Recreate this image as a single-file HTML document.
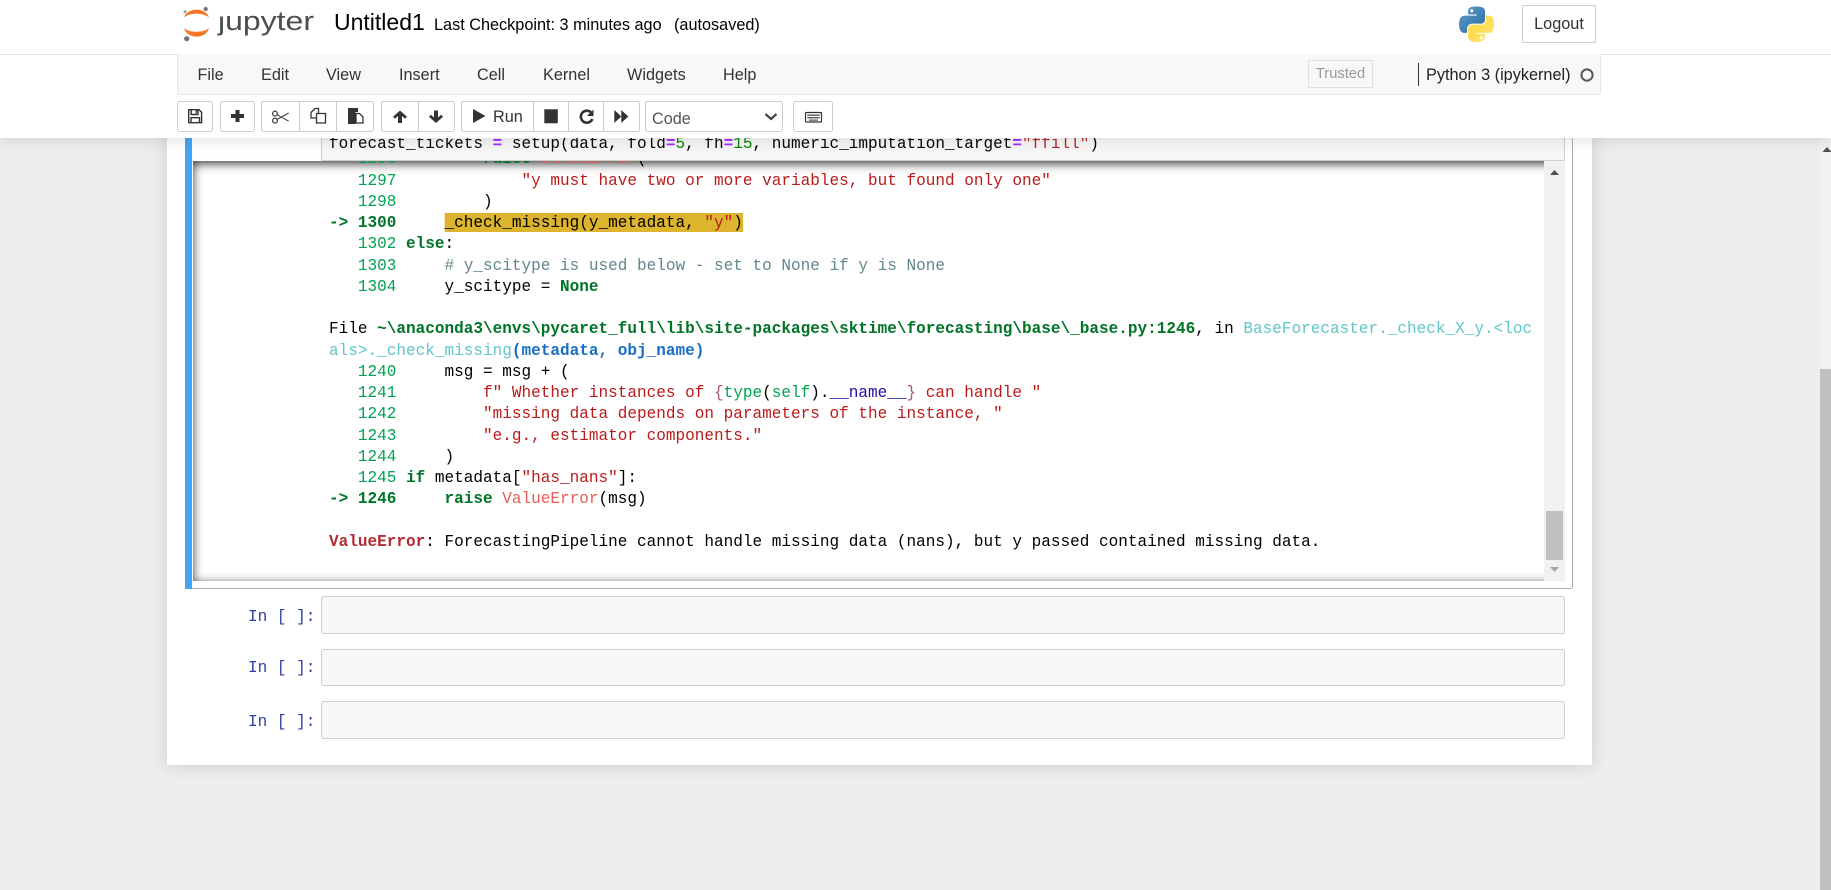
<!DOCTYPE html>
<html><head><meta charset="utf-8"><title>Untitled1 - Jupyter Notebook</title>
<style>
html,body{margin:0;padding:0;width:1831px;height:890px;overflow:hidden;background:#eee;font-family:"Liberation Sans",Arial,sans-serif;color:#000}
.a{position:absolute;box-sizing:border-box}
.t{position:absolute;white-space:pre;line-height:1}
.mono{font-family:"Liberation Mono",monospace;font-size:16.5px;line-height:21.25px;white-space:pre;margin:0;transform:scaleX(.972);transform-origin:0 0;position:absolute;color:#000}
.m{position:absolute;top:66px;font-size:16.25px;line-height:18px;color:#333}
.b{position:absolute;top:101px;height:31px;box-sizing:border-box;border:1px solid #ccc;background:#fff}
.ln{color:#00a250}.ar{color:#007427;font-weight:bold}.k{color:#007427;font-weight:bold}.s{color:#bb1a1a}.c{color:#60878e}.cy{color:#60c6c8}.bl{color:#1a6fc4;font-weight:bold}.hl{background:#ddb42d}.ve{color:#e75c58;font-weight:bold}.gn{color:#00a250}.pu{color:#a45a77}.nv{color:#1e0fa0}.ee{color:#b22b31;font-weight:bold}
.op{color:#a2f;font-weight:bold}.nm{color:#080}
.cell{position:absolute;left:321px;width:1244px;box-sizing:border-box;background:#f7f7f7;border:1px solid #cfcfcf;border-radius:2.5px}
</style></head><body>

<!-- notebook panel -->
<div class="a" style="left:167px;top:0;width:1425px;height:765px;background:#fff;box-shadow:0 0 15px 1px rgba(87,87,87,.2)"></div>

<!-- selected cell -->
<div class="a" style="left:185px;top:120px;width:388px;height:469px;border-left:7px solid #42a5f5"></div>
<div class="a" style="left:192px;top:120px;width:1381px;height:469px;border-right:1px solid #ababab;border-bottom:1px solid #ababab;border-radius:0 0 2.5px 0"></div>

<!-- input area -->
<div class="a" style="left:321px;top:120px;width:1244px;height:41px;background:#f7f7f7;border:1px solid #cfcfcf;overflow:hidden">
<pre class="mono" style="left:7px;top:11.5px">forecast_tickets <span class="op">=</span> setup(data, fold<span class="op">=</span><span class="nm">5</span>, fh<span class="op">=</span><span class="nm">15</span>, numeric_imputation_target<span class="op">=</span><span style="color:#ba2121">"ffill"</span>)</pre>
</div>

<!-- output -->
<div class="a" style="left:193px;top:161px;width:1372px;height:420px;overflow:hidden;box-shadow:inset 0 2.5px 10px rgba(0,0,0,.8)">
<pre class="mono" style="left:136.4px;top:-12.75px"><span class="ln">   1296</span>         <span class="k">raise</span> <span class="ve" style="font-weight:normal">ValueError</span>(
<span class="ln">   1297</span>             <span class="s">"y must have two or more variables, but found only one"</span>
<span class="ln">   1298</span>         )
<span class="ar">-&gt; 1300</span>     <span class="hl">_check_missing(y_metadata, <span class="s">"y"</span>)</span>
<span class="ln">   1302</span> <span class="k">else</span>:
<span class="ln">   1303</span>     <span class="c"># y_scitype is used below - set to None if y is None</span>
<span class="ln">   1304</span>     y_scitype = <span class="k">None</span>

File <span class="k">~\anaconda3\envs\pycaret_full\lib\site-packages\sktime\forecasting\base\_base.py:1246</span>, in <span class="cy">BaseForecaster._check_X_y.&lt;loc</span>
<span class="cy">als&gt;._check_missing</span><span class="bl">(metadata, obj_name)</span>
<span class="ln">   1240</span>     msg = msg + (
<span class="ln">   1241</span>         <span class="s">f" Whether instances of </span><span class="pu">{</span><span class="gn">type</span>(<span class="gn">self</span>).<span class="nv">__name__</span><span class="pu">}</span><span class="s"> can handle "</span>
<span class="ln">   1242</span>         <span class="s">"missing data depends on parameters of the instance, "</span>
<span class="ln">   1243</span>         <span class="s">"e.g., estimator components."</span>
<span class="ln">   1244</span>     )
<span class="ln">   1245</span> <span class="k">if</span> metadata[<span class="s">"has_nans"</span>]:
<span class="ar">-&gt; 1246</span>     <span class="k">raise</span> <span class="ve" style="font-weight:normal">ValueError</span>(msg)

<span class="ee">ValueError</span>: ForecastingPipeline cannot handle missing data (nans), but y passed contained missing data.</pre>
<div class="a" style="left:1351px;top:0;width:21px;height:420px;background:#f1f1f1"></div>
<div class="a" style="left:1353px;top:350px;width:17px;height:49px;background:#c1c1c1"></div>
</div>
<svg class="a" style="left:1544px;top:161px" width="21" height="420"><path d="M6 14l4.5-5 4.5 5z" fill="#505050"/><path d="M6 406l4.5 5 4.5-5z" fill="#a3a3a3"/></svg>

<!-- empty cells -->
<div class="cell" style="top:596px;height:38px"></div>
<div class="cell" style="top:649px;height:37px"></div>
<div class="cell" style="top:701px;height:38px"></div>
<pre class="mono" style="left:247.7px;top:605.5px;color:#303f9f">In [ ]:</pre>
<pre class="mono" style="left:247.7px;top:657px;color:#303f9f">In [ ]:</pre>
<pre class="mono" style="left:247.7px;top:710.5px;color:#303f9f">In [ ]:</pre>

<!-- page scrollbar -->
<div class="a" style="left:1818px;top:138px;width:13px;height:752px;background:#f1f1f1"></div>
<div class="a" style="left:1820px;top:369px;width:11px;height:521px;background:#c1c1c1"></div>
<svg class="a" style="left:1820px;top:145px" width="11" height="9"><path d="M2.5 7l4.5-5 4.5 5z" fill="#505050"/></svg>

<!-- header -->
<div class="a" style="left:0;top:0;width:1831px;height:138px;background:#fff;box-shadow:0 0 15px 1px rgba(87,87,87,.2)"></div>
<div class="a" style="left:0;top:54px;width:1831px;height:1px;background:#e7e7e7"></div>

<!-- jupyter logo -->
<svg class="a" style="left:0;top:0" width="330" height="54">
<path d="M184 17.5C187 7 206 7 209 17.5 204 12.5 189 12.5 184 17.5Z" fill="#f37726"/>
<path d="M184 28C187 39.5 206 39.5 209 28 204 33 189 33 184 28Z" fill="#f37726"/>
<circle cx="205.7" cy="9" r="2.1" fill="#767677"/><circle cx="185" cy="11.7" r="1.5" fill="#9e9e9e"/><circle cx="186.7" cy="38.7" r="2.6" fill="#757575"/>
<text x="218" y="30" font-family="Liberation Sans" font-size="27" fill="#4e4e4e" textLength="96" lengthAdjust="spacingAndGlyphs">jupyter</text>
<rect x="216" y="8" width="9" height="8.5" fill="#fff"/>
</svg>

<div class="t" style="left:334px;top:10.5px;font-size:23px">Untitled1</div>
<div class="t" style="left:434px;top:17px;font-size:16.25px">Last Checkpoint: 3 minutes ago</div>
<div class="t" style="left:674px;top:17px;font-size:16.25px">(autosaved)</div>

<!-- python logo -->
<svg class="a" style="left:1459px;top:6px" width="35" height="36" viewBox="0 0 110.4 110.4">
<defs><linearGradient id="g1" x1="0" y1="0" x2="1" y2="1"><stop offset="0" stop-color="#5a9fd4"/><stop offset="1" stop-color="#306998"/></linearGradient>
<linearGradient id="g2" x1="0" y1="0" x2="1" y2="1"><stop offset="0" stop-color="#ffd43b"/><stop offset="1" stop-color="#ffe873"/></linearGradient></defs>
<path fill="url(#g1)" d="M54.92.001c-4.584.021-8.961.412-12.812 1.094C30.761 3.099 28.7 7.3 28.7 15.032V25.25h26.813v3.406H18.637c-7.793 0-14.616 4.684-16.75 13.594-2.462 10.213-2.571 16.586 0 27.25 1.906 7.938 6.457 13.594 14.25 13.594h9.219V70.844c0-8.85 7.657-16.656 16.75-16.656h26.781c7.455 0 13.406-6.138 13.406-13.625V15.032c0-7.266-6.13-12.725-13.406-13.937C64.282.328 59.502-.02 54.918.001zM40.419 8.22c2.77 0 5.031 2.299 5.031 5.125 0 2.816-2.262 5.094-5.031 5.094-2.78 0-5.031-2.277-5.031-5.094 0-2.826 2.252-5.125 5.031-5.125z"/>
<path fill="url(#g2)" d="M85.638 28.657V40.563c0 9.231-7.826 17-16.75 17H42.106c-7.336 0-13.406 6.279-13.406 13.625v25.531c0 7.266 6.319 11.54 13.406 13.625 8.487 2.496 16.626 2.947 26.781 0 6.75-1.954 13.406-5.888 13.406-13.625V86.5H55.513v-3.406h40.187c7.793 0 10.696-5.436 13.406-13.594 2.8-8.399 2.68-16.476 0-27.25-1.926-7.757-5.604-13.594-13.406-13.594zM70.575 93.313c2.78 0 5.031 2.277 5.031 5.094 0 2.826-2.252 5.125-5.031 5.125-2.77 0-5.031-2.299-5.031-5.125 0-2.816 2.262-5.094 5.031-5.094z"/>
</svg>

<!-- logout -->
<div class="a" style="left:1522px;top:5px;width:74px;height:38px;border:1px solid #ccc;border-radius:1px;text-align:center;font-size:16.25px;line-height:36px;color:#333">Logout</div>

<!-- menubar -->
<div class="a" style="left:177px;top:54px;width:1424px;height:41px;background:#f8f8f8;border:1px solid #e7e7e7;border-top:none;border-radius:0 0 3px 3px"></div>
<div class="m" style="left:197.5px">File</div>
<div class="m" style="left:261px">Edit</div>
<div class="m" style="left:326px">View</div>
<div class="m" style="left:399px">Insert</div>
<div class="m" style="left:477px">Cell</div>
<div class="m" style="left:543px">Kernel</div>
<div class="m" style="left:627px">Widgets</div>
<div class="m" style="left:723px">Help</div>
<div class="a" style="left:1308px;top:60px;width:65px;height:28px;border:1px solid #e0e0e0;text-align:center;font-size:14.7px;line-height:26px;color:#999;background:#f8f8f8">Trusted</div>
<div class="a" style="left:1418px;top:63px;width:1px;height:23px;background:#333"></div>
<div class="m" style="left:1426px;color:#222">Python 3 (ipykernel)</div>
<svg class="a" style="left:1579px;top:67px" width="16" height="16"><circle cx="8" cy="8" r="5.6" fill="none" stroke="#555" stroke-width="2"/></svg>

<!-- toolbar -->
<div class="b" style="left:177px;width:36px;border-radius:2.5px"></div>
<div class="b" style="left:220px;width:35px;border-radius:2.5px"></div>
<div class="b" style="left:261px;width:39px;border-radius:2.5px 0 0 2.5px"></div>
<div class="b" style="left:299px;width:38px;"></div>
<div class="b" style="left:336px;width:38px;border-radius:0 2.5px 2.5px 0"></div>
<div class="b" style="left:381px;width:38px;border-radius:2.5px 0 0 2.5px"></div>
<div class="b" style="left:418px;width:37px;border-radius:0 2.5px 2.5px 0"></div>
<div class="b" style="left:461px;width:73px;border-radius:2.5px 0 0 2.5px"></div>
<div class="b" style="left:533px;width:36px"></div>
<div class="b" style="left:568px;width:36px"></div>
<div class="b" style="left:603px;width:37px;border-radius:0 2.5px 2.5px 0"></div>
<div class="b" style="left:645px;width:138px;border-radius:2.5px;font-size:16.25px;line-height:35px;padding-left:6px;color:#555">Code</div>
<div class="b" style="left:793px;width:40px;border-radius:2.5px"></div>
<div class="t" style="left:493px;top:109px;font-size:16.25px;color:#333">Run</div>

<svg class="a" style="left:0;top:90px" width="900" height="50" fill="#333">
<!-- save -->
<g fill="none" stroke="#333" stroke-width="1.4"><path d="M188.7 19.7h10.3l2.6 2.6v10.4h-12.9z"/><path d="M191.2 19.7v4.8h6.8v-4.8"/><path d="M191 32.7v-5h8.5v5"/></g>
<rect x="195.6" y="20.4" width="1.4" height="3" />
<!-- plus -->
<path d="M235.5 20h4v4h4.5v4h-4.5v4h-4v-4H231v-4h4.5z"/>
<!-- scissors -->
<g fill="none" stroke="#444" stroke-width="1.3"><circle cx="275" cy="23.6" r="2.4"/><circle cx="275" cy="30.6" r="2.4"/><path d="M277.2 24.8l11.5 6.4M277.2 29.4l11.5-6.4" stroke-width="1.1"/></g>
<!-- copy -->
<g fill="#fff" stroke="#333" stroke-width="1.3" transform="translate(0,-2)"><path d="M311 24.5l4-4h3.5v9.5H311z"/><path d="M316.5 25.5V35h9V25.5z"/></g>
<!-- paste -->
<g transform="translate(0,-2)"><path d="M348 20h10v4h-2.5v12H348z"/><path d="M356 25.5h3.5l3.5 3.5v6h-7z" fill="#fff" stroke="#333" stroke-width="1.3"/></g>
<!-- up -->
<path d="M400 20.5l7 6.3-2 2-3-2.8V33h-4V26l-3 2.8-2-2z"/>
<!-- down -->
<path d="M436 33l7-6.3-2-2-3 2.8V20.5h-4v7l-3-2.8-2 2z"/>
<!-- play -->
<path d="M473 19l12.5 7-12.5 7z"/>
<!-- stop -->
<rect x="544.3" y="19.3" width="13.5" height="14" />
<!-- restart -->
<path d="M591.6 23A6 6 0 1 0 592.4 29" fill="none" stroke="#333" stroke-width="2.6"/><path d="M593.5 19.5v6.5h-6.5z"/>
<!-- fast forward -->
<path d="M614.3 20l7 6.5-7 6.5zM621.3 20l7 6.5-7 6.5z"/>
<!-- chevron -->
<path d="M765.5 24l5.5 5 5.5-5" fill="none" stroke="#444" stroke-width="2.2"/>
<!-- keyboard -->
<rect x="805.5" y="22.5" width="16" height="9.5" rx="1" fill="#fff" stroke="#333" stroke-width="1.2"/>
<path d="M807.3 24.5h12.4v1.4h-12.4zM807.3 27h12.4v1.4h-12.4zM809 29.5h9v1.2h-9z" fill="#555"/>
</svg>
</body></html>
